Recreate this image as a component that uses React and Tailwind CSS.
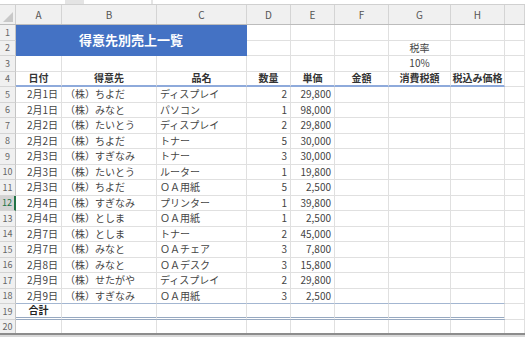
import clsx from 'clsx';

const gridCols = 'grid grid-cols-[16px_46px_95px_90px_44px_44px_54px_62px_54px_1fr] auto-rows-[15.5px]';

const letters = ['A', 'B', 'C', 'D', 'E', 'F', 'G', 'H', ''];

const rows = [
  ['2月1日', '（株）ちよだ', 'ディスプレイ', '2', '29,800'],
  ['2月1日', '（株）みなと', 'パソコン', '1', '98,000'],
  ['2月2日', '（株）たいとう', 'ディスプレイ', '2', '29,800'],
  ['2月2日', '（株）ちよだ', 'トナー', '5', '30,000'],
  ['2月3日', '（株）すぎなみ', 'トナー', '3', '30,000'],
  ['2月3日', '（株）たいとう', 'ルーター', '1', '19,800'],
  ['2月3日', '（株）ちよだ', 'ＯＡ用紙', '5', '2,500'],
  ['2月4日', '（株）すぎなみ', 'プリンター', '1', '39,800'],
  ['2月4日', '（株）としま', 'ＯＡ用紙', '1', '2,500'],
  ['2月7日', '（株）としま', 'トナー', '2', '45,000'],
  ['2月7日', '（株）みなと', 'ＯＡチェア', '3', '7,800'],
  ['2月8日', '（株）みなと', 'ＯＡデスク', '3', '15,800'],
  ['2月9日', '（株）せたがや', 'ディスプレイ', '2', '29,800'],
  ['2月9日', '（株）すぎなみ', 'ＯＡ用紙', '3', '2,500'],
];

const headers = ['日付', '得意先', '品名', '数量', '単価', '金額', '消費税額', '税込み価格'];

function Cell({ children, className }) {
  return (
    <div
      className={clsx(
        'flex items-center whitespace-nowrap border-r border-b border-[#e0e0e0] px-[3px] leading-[12px]',
        className
      )}
    >
      {children}
    </div>
  );
}

function RowNum({ n, active }) {
  return (
    <div
      className={clsx(
        'flex items-center justify-center border-b border-[#d4d4d4] text-[9px] leading-[11px]',
        active
          ? 'border-r-2 border-r-[#217346] bg-[#d3d3d3] text-[#217346]'
          : 'border-r border-r-[#c4c4c4] bg-[#f0f0f0] text-[#666]'
      )}
    >
      {n}
    </div>
  );
}

const total = 'border-b-[3px] border-double border-b-[#97a9c1]';

export default function App() {
  return (
    <div className="flex h-[337px] w-[525px] flex-col overflow-hidden bg-white font-['Noto_Sans_CJK_JP',sans-serif] text-[10px] text-[#444]">
      {/* formula bar edge */}
      <div className="flex h-[5px] border-b border-[#d0d0d0]">
        <div className="w-[65px] bg-white" />
        <div className="w-[19px] bg-[#e4e4e4]" />
        <div className="w-[67px] bg-white" />
        <div className="w-[2px] bg-[#e4e4e4]" />
        <div className="flex-1 bg-white" />
      </div>

      {/* column letters */}
      <div className="grid h-[20px] grid-cols-[16px_46px_95px_90px_44px_44px_54px_62px_54px_1fr] border-b border-[#bcbcbc] bg-[#f0f0f0]">
        <div className="relative border-r border-[#d0d0d0]">
          <svg className="absolute right-[2px] bottom-[2px]" width="10" height="10" viewBox="0 0 10 10">
            <polygon points="10,0 10,10 0,10" fill="#c8c8c8" />
          </svg>
        </div>
        {letters.map((l, i) => (
          <div key={i} className="flex items-center justify-center border-r border-[#d4d4d4] text-[10px] text-[#555]">
            {l}
          </div>
        ))}
      </div>

      {/* sheet body */}
      <div className="flex-1 overflow-hidden">
        <div className={gridCols}>
          {/* row 1 */}
          <RowNum n="1" />
          <div className="col-span-3 row-span-2 flex items-center justify-center border-r border-b border-[#4472c4] bg-[#4472c4] text-[13px] font-bold text-white">
            得意先別売上一覧
          </div>
          <Cell />
          <Cell />
          <Cell />
          <Cell />
          <Cell />
          <Cell />

          {/* row 2 */}
          <RowNum n="2" />
          <Cell />
          <Cell />
          <Cell />
          <Cell className="justify-center">税率</Cell>
          <Cell />
          <Cell />

          {/* row 3 */}
          <RowNum n="3" />
          <Cell />
          <Cell />
          <Cell />
          <Cell />
          <Cell />
          <Cell />
          <Cell className="justify-center">10%</Cell>
          <Cell />
          <Cell />

          {/* row 4 headers */}
          <RowNum n="4" />
          {headers.map((h) => (
            <Cell key={h} className="justify-center border-b-2 border-b-[#8eaadb] font-bold text-[#333]">
              {h}
            </Cell>
          ))}
          <Cell />

          {/* data */}
          {rows.map((r, i) => {
            const last = i === rows.length - 1;
            const line = last ? 'border-b-[#a3b6d1]' : '';
            return [
              <RowNum key={`n${i}`} n={i + 5} active={i + 5 === 12} />,
              <Cell key={`a${i}`} className={clsx('justify-end', line)}>{r[0]}</Cell>,
              <Cell key={`b${i}`} className={line}>{r[1]}</Cell>,
              <Cell key={`c${i}`} className={line}>{r[2]}</Cell>,
              <Cell key={`d${i}`} className={clsx('justify-end', line)}>{r[3]}</Cell>,
              <Cell key={`e${i}`} className={clsx('justify-end', line)}>{r[4]}</Cell>,
              <Cell key={`f${i}`} className={line} />,
              <Cell key={`g${i}`} className={line} />,
              <Cell key={`h${i}`} className={line} />,
              <Cell key={`i${i}`} />,
            ];
          })}

          {/* row 19 total */}
          <RowNum n="19" />
          <Cell className={clsx('justify-center font-bold text-[#222]', total)}>合計</Cell>
          <Cell className={total} />
          <Cell className={total} />
          <Cell className={total} />
          <Cell className={total} />
          <Cell className={total} />
          <Cell className={total} />
          <Cell className={total} />
          <Cell />

          {/* row 20 */}
          <RowNum n="20" />
          <Cell />
          <Cell />
          <Cell />
          <Cell />
          <Cell />
          <Cell />
          <Cell />
          <Cell />
          <Cell />
        </div>
      </div>

      {/* bottom edge */}
      <div className="h-[4px] border-t-2 border-[#8c8c8c] bg-[#d8d8d8]" />
    </div>
  );
}
